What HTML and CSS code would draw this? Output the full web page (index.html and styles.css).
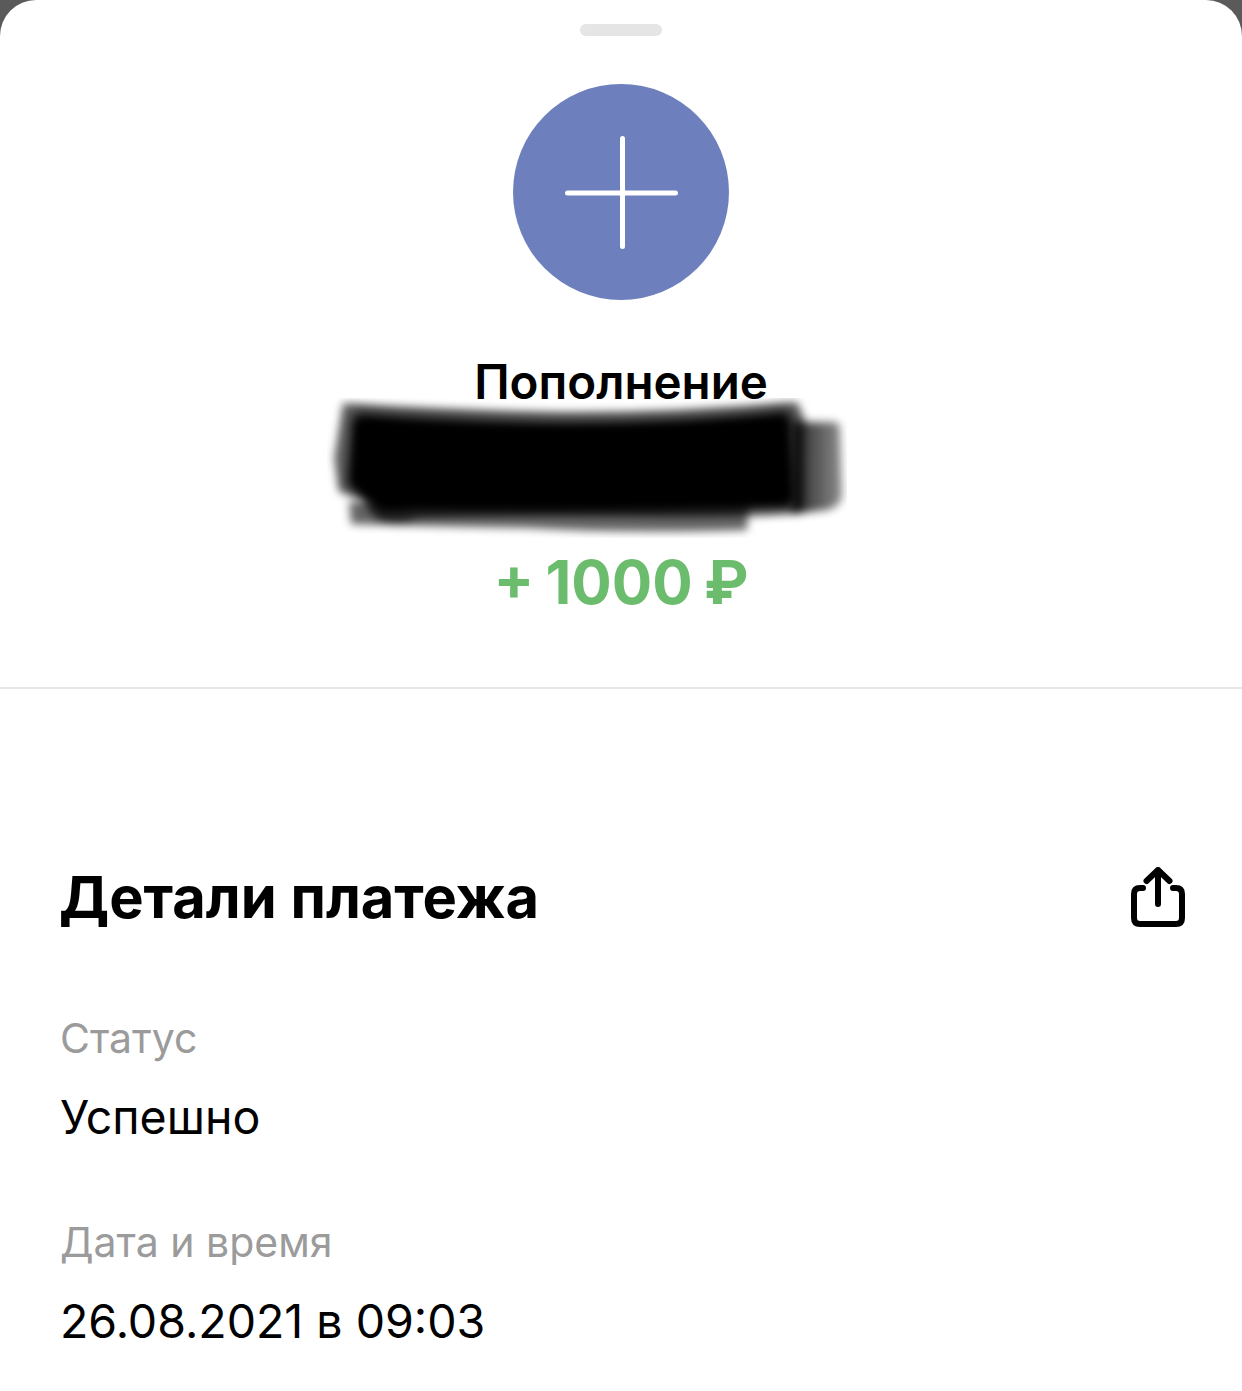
FILE: index.html

```html
<!DOCTYPE html>
<html lang="ru">
<head>
    <meta charset="UTF-8">
    <meta name="viewport" content="width=device-width, initial-scale=1.0">
    <title>Детали платежа</title>
    <link rel="stylesheet" href="styles.css">
</head>
<body>

    <div class="sheet">
        <div class="handle"></div>

        <!-- Operation summary -->
        <div class="summary">
            <div class="avatar">
                <svg width="114" height="114" viewBox="0 0 114 114">
                    <path d="M58.500 3.500V111.500M3.500 58H111.500" stroke="#fff" stroke-width="5" stroke-linecap="round" fill="none"/>
                </svg>
            </div>
            <div class="summary-title">Пополнение</div>
            <div class="redacted">
                <svg width="520" height="140" viewBox="0 0 520 140">
                    <defs>
                        <filter id="soft" x="-10%" y="-20%" width="120%" height="140%">
                            <feGaussianBlur stdDeviation="4"/>
                        </filter>
                        <filter id="softer" x="-10%" y="-20%" width="120%" height="140%">
                            <feGaussianBlur stdDeviation="7"/>
                        </filter>
                        <linearGradient id="tail" x1="0" y1="0" x2="1" y2="0">
                            <stop offset="0" stop-color="#000" stop-opacity="0.85"/>
                            <stop offset="1" stop-color="#000" stop-opacity="0.45"/>
                        </linearGradient>
                    </defs>
                    <g filter="url(#soft)">
                        <path d="M465 24H508Q513 24 513 34L515 96Q515 108 500 112L465 116Z" fill="url(#tail)"/>
                        <path d="M22 104H422L420 132Q300 136 200 130Q80 128 24 126Z" fill="#000" opacity="0.6"/>
                        <path d="M16 5Q120 12 240 14Q360 14 470 4L478 22L476 114Q440 120 300 118Q180 116 90 120Q76 128 60 124Q44 122 38 100L12 94L7 60Z" fill="#000" opacity="0.6"/>
                    </g>
                    <path filter="url(#softer)" d="M26 14Q120 22 240 24Q360 24 464 12L470 108Q300 114 90 112L54 114L20 88Z" fill="#000"/>
                    <path filter="url(#soft)" d="M30 22Q120 30 240 30Q360 30 458 20L462 106Q300 110 90 108L56 110L26 84Z" fill="#000"/>
                </svg>
            </div>
            <div class="summary-amount">+ 1000 ₽</div>
        </div>

        <!-- Payment details -->
        <div class="details">
            <div class="details-head">
                <h2>Детали платежа</h2>
                <svg class="share" width="54" height="60" viewBox="0 0 54 60" fill="none" stroke="#000" stroke-width="6" stroke-linecap="round" stroke-linejoin="round">
                    <path d="M12 21H9Q3 21 3 27V51Q3 57 9 57H45Q51 57 51 51V27Q51 21 45 21H42"/>
                    <path d="M27 37V3M15.500 14L27 3L38.500 14"/>
                </svg>
            </div>
            <div class="field">
                <div class="field-label">Статус</div>
                <div class="field-value">Успешно</div>
            </div>
            <div class="field">
                <div class="field-label">Дата и время</div>
                <div class="field-value">26.08.2021 в 09:03</div>
            </div>
        </div>
    </div>

</body>
</html>
```

FILE: styles.css

```css
html, body {
    height: 100%;
}
body {
    margin: 0;
    background-color: #5a5a5a;
    font-family: Inter, "Liberation Sans", sans-serif;
    color: #000;
    overflow: hidden;
}
.sheet {
    height: 1391px;
    padding-top: 24px;
    box-sizing: border-box;
    background-color: #fff;
    border-radius: 36px 36px 0 0;
    overflow: hidden;
}
.handle {
    width: 82px;
    height: 12px;
    margin: 0 auto;
    background-color: #e5e5e5;
    border-radius: 6px;
}
.summary {
    display: flex;
    flex-direction: column;
    align-items: center;
    height: 653px;
    padding-top: 48px;
    box-sizing: border-box;
    border-bottom: 2px solid #e6e6e6;
}
.avatar {
    width: 216px;
    height: 216px;
    flex-shrink: 0;
    display: flex;
    align-items: center;
    justify-content: center;
    border-radius: 50%;
    background-color: #6e7fbd;
}
.summary-title {
    margin-top: 54px;
    font-size: 47.5px;
    line-height: 56px;
    font-weight: 600;
}
.redacted {
    height: 136px;
    margin-top: -12px;
    margin-left: -68px;
}
.summary-amount {
    margin-top: 12px;
    font-size: 60px;
    line-height: 72px;
    font-weight: 700;
    word-spacing: -3px;
    color: #6cbc6e;
}
.details {
    padding: 0 57px 0 59px;
}
.details-head {
    display: flex;
    align-items: center;
    justify-content: space-between;
    margin-top: 172px;
    margin-bottom: 80px;
}
.details-head h2 {
    margin: 0;
    font-size: 57.8px;
    line-height: 72px;
    font-weight: 700;
}
.field {
    padding-left: 1px;
    margin-bottom: 72px;
}
.field-label {
    font-size: 41px;
    line-height: 50px;
    color: #9b9b9b;
}
.field-value {
    margin-top: 26px;
    font-size: 46.5px;
    line-height: 56px;
}
```
